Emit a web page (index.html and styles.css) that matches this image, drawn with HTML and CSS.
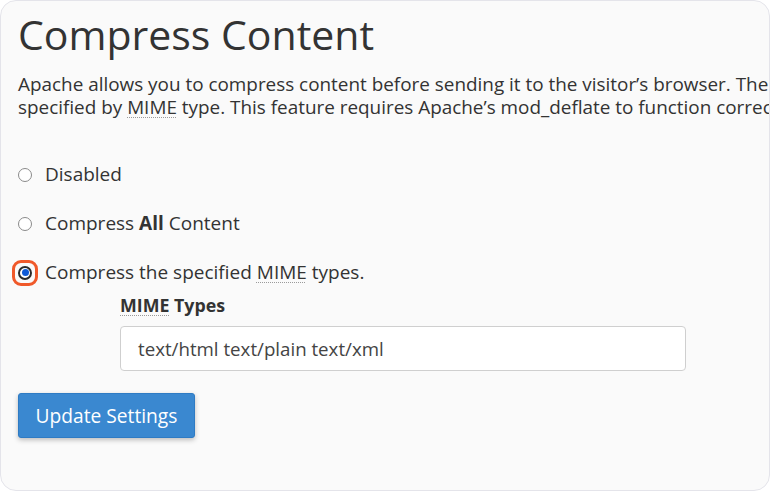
FILE: index.html
```html
<!DOCTYPE html>
<html>
<head>
<meta charset="utf-8">
<link rel="stylesheet" href="styles.css">
</head>
<body>
<div class="frame">
  <div class="content">
    <h1 class="title">Compress Content</h1>
    <p class="intro">Apache allows you to compress content before sending it to the visitor’s browser. The types of content to compress are<br>specified by <abbr class="abbr">MIME</abbr> type. This feature requires Apache’s mod_deflate to function correctly.</p>
    <div class="options">
      <label class="option"><span class="radio"></span><span>Disabled</span></label>
      <label class="option"><span class="radio"></span><span>Compress <b>All</b> Content</span></label>
      <label class="option"><span class="radio checked"><span class="dot"></span></span><span>Compress the specified <abbr class="abbr">MIME</abbr> types.</span></label>
    </div>
    <div class="mime">
      <div class="mime-label"><abbr class="abbr">MIME</abbr> Types</div>
      <div class="input">text/html text/plain text/xml</div>
    </div>
    <button class="btn">Update Settings</button>
  </div>
</div>
</body>
</html>
```
FILE: styles.css
```css
html, body {
  margin: 0;
  padding: 0;
  background: #ffffff;
}
.frame {
  width: 770px;
  height: 491px;
  box-sizing: border-box;
  border: 1px solid #e4e4ea;
  border-radius: 16px;
  background: #fafafa;
  overflow: hidden;
  font-family: "Open Sans", "Noto Sans", sans-serif;
  color: #333333;
}
.content {
  width: 1200px;
  padding: 5px 0 0 17px;
}
.title {
  margin: 0;
  font-size: 41px;
  font-weight: 400;
  line-height: 56px;
  color: #333;
}
.intro {
  margin: 11px 0 0 0;
  font-size: 18.9px;
  line-height: 23px;
  white-space: nowrap;
}
.abbr {
  text-decoration: underline dotted #9a9a9a;
  text-decoration-thickness: 1px;
  text-underline-offset: 3px;
}
.options {
  margin-top: 44px;
  display: flex;
  flex-direction: column;
  gap: 26px;
}
.option {
  display: flex;
  align-items: center;
  gap: 13px;
  font-size: 19px;
  line-height: 23px;
}
.option b {
  font-weight: 700;
}
.radio {
  width: 14px;
  height: 14px;
  box-sizing: border-box;
  border: 1.5px solid #8a8a8a;
  border-radius: 50%;
  background: #fff;
  position: relative;
  flex: none;
}
.radio.checked {
  border: 2px solid #2b2b2b;
  background: #fff;
  display: flex;
  align-items: center;
  justify-content: center;
}
.radio.checked::before {
  content: "";
  position: absolute;
  left: -8px;
  top: -8px;
  width: 26px;
  height: 26px;
  box-sizing: border-box;
  border: 3px solid #f0592a;
  border-radius: 9px;
}
.dot {
  width: 7px;
  height: 7px;
  border-radius: 50%;
  background: #0f5bd8;
}
.mime {
  margin: 9px 0 0 102px;
  width: 566px;
}
.mime-label {
  font-size: 17.8px;
  font-weight: 700;
  line-height: 24px;
}
.input {
  margin-top: 9px;
  box-sizing: border-box;
  height: 45px;
  border: 1px solid #cfcfcf;
  border-radius: 4px;
  background: #fff;
  padding: 0 17px;
  display: flex;
  align-items: center;
  font-size: 18.7px;
  color: #444;
}
.btn {
  margin-top: 22px;
  width: 177px;
  height: 45px;
  border: 1px solid #2e7bc4;
  border-radius: 3px;
  background: #3a88d0;
  color: #fff;
  font-family: "Open Sans", "Noto Sans", sans-serif;
  font-size: 19.2px;
  padding: 0;
  box-shadow: 0 2px 5px rgba(0,0,0,0.25);
}
```
